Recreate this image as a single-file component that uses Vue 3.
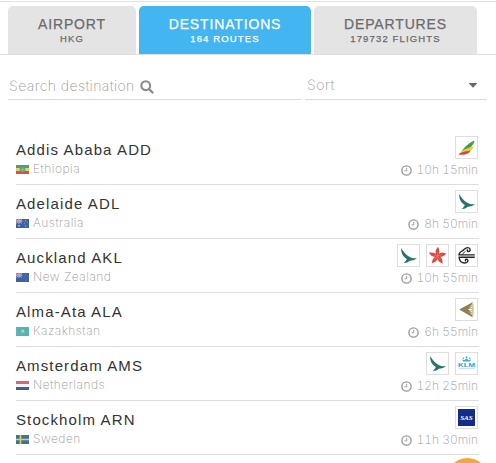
<script setup>
const tabs = [
  { title: 'AIRPORT', sub: 'HKG', cls: 'airport' },
  { title: 'DESTINATIONS', sub: '164 ROUTES', cls: 'dest' },
  { title: 'DEPARTURES', sub: '179732 FLIGHTS', cls: 'dep' },
]
const rows = [
  { name: 'Addis Ababa ADD', country: 'Ethiopia', flag: 'et', time: '10h 15min', logos: ['ethiopian'] },
  { name: 'Adelaide ADL', country: 'Australia', flag: 'au', time: '8h 50min', logos: ['cathay'] },
  { name: 'Auckland AKL', country: 'New Zealand', flag: 'nz', time: '10h 55min', logos: ['cathay', 'hongkong', 'airnz'] },
  { name: 'Alma-Ata ALA', country: 'Kazakhstan', flag: 'kz', time: '6h 55min', logos: ['astana'] },
  { name: 'Amsterdam AMS', country: 'Netherlands', flag: 'nl', time: '12h 25min', logos: ['cathay', 'klm'] },
  { name: 'Stockholm ARN', country: 'Sweden', flag: 'se', time: '11h 30min', logos: ['sas'] },
]
</script>

<template>
  <div class="page">
    <nav class="tabs">
      <div v-for="t in tabs" :key="t.title" class="tab" :class="t.cls">
        <div class="tab-title">{{ t.title }}</div>
        <div class="tab-sub">{{ t.sub }}</div>
      </div>
    </nav>

    <div class="filters">
      <div class="field search">
        <span>Search destination</span>
        <svg width="14" height="14" viewBox="0 0 14 14">
          <circle cx="5.7" cy="5.7" r="4.4" fill="none" stroke="#8c8c8c" stroke-width="2.1" />
          <path d="M9 9l3.5 3.5" stroke="#8c8c8c" stroke-width="2.4" stroke-linecap="round" />
        </svg>
      </div>
      <div class="field sort">
        <span>Sort</span>
        <svg width="10" height="5" viewBox="0 0 10 5"><path d="M0.6 0h8.8L5 4.7z" fill="#666" /></svg>
      </div>
    </div>

    <div class="list">
      <div v-for="r in rows" :key="r.name" class="row">
        <div class="left">
          <div class="name">{{ r.name }}</div>
          <div class="country">
            <svg class="flag" width="13" height="9" viewBox="0 0 13 9">
              <template v-if="r.flag === 'et'">
                <path fill="#4a9a62" d="M0 0h13v3H0z" /><path fill="#e8d04c" d="M0 3h13v3H0z" /><path fill="#d8493c" d="M0 6h13v3H0z" />
                <circle cx="6.5" cy="4.5" r="2.8" fill="#4d9f9b" /><path d="M6.5 2.8v3.4M5 4.5h3" stroke="#a6c777" stroke-width=".6" />
              </template>
              <template v-else-if="r.flag === 'au' || r.flag === 'nz'">
                <path fill="#315aa3" d="M0 0h13v9H0z" />
                <path d="M0 0l6 4.5M6 0L0 4.5" stroke="#b9b9dc" stroke-width=".8" />
                <path d="M3 0v4.5M0 2.2h6.2" stroke="#dcdcec" stroke-width="1.3" />
                <path d="M3 0v4.5M0 2.2h6.2" stroke="#d2626e" stroke-width=".7" />
                <g :fill="r.flag === 'au' ? '#e4e9f4' : '#a981a8'">
                  <circle cx="9.7" cy="1.8" r=".5" /><circle cx="8.3" cy="4" r=".4" /><circle cx="11.2" cy="3.6" r=".4" /><circle cx="9.7" cy="7" r=".5" />
                  <circle v-if="r.flag === 'au'" cx="3" cy="6.8" r=".8" />
                </g>
              </template>
              <template v-else-if="r.flag === 'kz'">
                <path fill="#49afb9" d="M0 0h13v9H0z" /><circle cx="6.7" cy="3.9" r="1.3" fill="#d5d868" />
                <path d="M4.3 5q2.4 2.5 4.8 0" fill="none" stroke="#9fc98a" stroke-width=".7" /><path d="M1 1v7" stroke="#84bd94" stroke-width=".6" />
              </template>
              <template v-else-if="r.flag === 'nl'">
                <path fill="#d3616a" d="M0 0h13v3H0z" /><path fill="#f5f5f5" d="M0 3h13v3H0z" /><path fill="#35568f" d="M0 6h13v3H0z" />
              </template>
              <template v-else>
                <path fill="#346b9a" d="M0 0h13v9H0z" /><path d="M4.5 0v9M0 4.5h13" stroke="#e4cf48" stroke-width="1.6" />
              </template>
            </svg>
            <span>{{ r.country }}</span>
          </div>
        </div>
        <div class="right">
          <div class="logos">
            <div v-for="l in r.logos" :key="l" class="logo">
              <svg width="21" height="21" viewBox="0 0 21 21">
                <template v-if="l === 'ethiopian'">
                  <path d="M18.7 3.4C13.5 5.4 8.6 9.5 5.8 14.2c6-1.2 11.2-4.3 12.9-10.8z" fill="#4d9a4a" />
                  <path d="M17.6 9C13 11 7.5 11.8 3.6 16.2c6.8.3 12.6-1.2 14-7.2z" fill="#e7d13f" />
                  <path d="M14.6 13.6C10.8 14.6 7 14.2 2.3 17.4c5.3 1 10.6.2 12.3-3.8z" fill="#d94636" />
                </template>
                <path v-else-if="l === 'cathay'" d="M3.3 3C2.8 8 5 11.8 8.8 14c-.7 1.7-1.9 3-3.2 4 2.9.1 4.4-.8 5.9-2 1.7-.6 5.2-.2 7.2-2.9-3 .6-5.6-.1-7.8-1.6C7.9 9.5 5.3 6.9 3.3 3z" fill="#28716e" />
                <template v-else-if="l === 'hongkong'">
                  <g fill="#dc473f">
                    <path v-for="n in 5" :key="n" :transform="`rotate(${n * 72} 10.5 11)`" d="M10.5 12C8 8.8 8.6 7 8.8 5.2L10.9 1.8C13 5.2 13 8.8 10.5 12z" />
                  </g>
                  <path d="M10.5 11l.3-4M10.5 11l4-1.2M10.5 11l2.3 3.5M10.5 11l-2.3 3.5M10.5 11l-4-1.2" stroke="#ef928a" stroke-width=".5" />
                </template>
                <g v-else-if="l === 'airnz'" fill="none" stroke="#222" stroke-width="1.4">
                  <path d="M18.8 9.9H3C3 7.2 5 6.6 6.8 5.6 8.4 4.4 9.3 2.6 11.8 2.6c2.8 0 3.2 3.8.6 3.9-1.3 0-1.6-1.4-.6-1.9" />
                  <path d="M18.8 12.3H3.2c0 3.4 2.3 5.7 5.5 5.7 3.6 0 4.2-3.7 1.8-3.8-1.2 0-1.5 1.4-.5 1.8" />
                  <path d="M6.4 9.5C7 7.8 8.4 7.6 9.4 6.4" stroke-width="1" />
                </g>
                <template v-else-if="l === 'astana'">
                  <path d="M3.2 10.5L16.9 3 13.9 9.4 12 10.5l1.9 1.1 3 6.9z" fill="#8e8252" />
                  <g fill="none" stroke="#b6a978" stroke-width="1"><path d="M16.9 4.5v12.6M16.7 9.6c-3.5.3-4-2.7-2.2-3 1.5-.1 1.4 1.4.5 1.4M16.7 11.5c-3.5-.3-4 2.7-2.2 3 1.5.1 1.4-1.4.5-1.4" /></g>
                </template>
                <template v-else-if="l === 'klm'">
                  <g fill="#35ade0"><circle cx="7.4" cy="5.2" r=".8" /><circle cx="10.5" cy="4.2" r=".9" /><circle cx="13.6" cy="5.2" r=".8" /><path d="M6 6.2l2.3 1 2.2-2 2.2 2 2.3-1-1 2.4H7z" /><path d="M2.5 15.2h16v.6h-16z" opacity=".5" /></g>
                  <text x="2" y="14" textLength="17" lengthAdjust="spacingAndGlyphs" font-size="6.2" font-weight="700" fill="#229fda">KLM</text>
                </template>
                <template v-else>
                  <path fill="#142d88" d="M2 2h17v17H2z" />
                  <text x="4.2" y="12.8" textLength="12.6" lengthAdjust="spacingAndGlyphs" font-size="6.3" font-weight="700" font-style="italic" font-family="Liberation Serif, serif" fill="#fff">SAS</text>
                </template>
              </svg>
            </div>
          </div>
          <div class="time">
            <svg width="11" height="11" viewBox="0 0 11 11" fill="none" stroke="#999">
              <circle cx="5.5" cy="5.5" r="4.6" stroke-width="1.4" /><path d="M5.7 2.8v3H3.6" stroke-width="1" />
            </svg>
            <span>{{ r.time }}</span>
          </div>
        </div>
      </div>
    </div>
    <div class="fab"></div>
  </div>
</template>

<style>
body { margin: 0; background: #fff; overflow: hidden; }
</style>

<style scoped>
.page {
  position: relative;
  box-sizing: border-box;
  width: 496px;
  height: 463px;
  overflow: hidden;
  padding-top: 1px;
  font-family: "Liberation Sans", Arial, sans-serif;
  background: linear-gradient(#e3e3e3, #e3e3e3) 0 1px / 100% 1px no-repeat #fff;
}
.tabs {
  display: flex;
  gap: 3px;
  padding: 5px 8px 0;
  height: 48px;
  border-bottom: 1px solid #dfdfdf;
}
.tab {
  box-sizing: border-box;
  height: 48px;
  padding-top: 10px;
  border-radius: 5px 5px 0 0;
  background: #e4e4e4;
  color: #6b6b6b;
  text-align: center;
  white-space: nowrap;
}
.airport { width: 128px; }
.dest { width: 172px; background: #43b5f0; color: #fff; }
.dep { width: 163px; }
.tab-title { font-size: 14px; line-height: 16px; letter-spacing: 0.85px; -webkit-text-stroke: 0.25px; }
.tab-sub { font-size: 9.5px; line-height: 13px; letter-spacing: 1.15px; -webkit-text-stroke: 0.25px; }
.filters { display: flex; gap: 4px; padding: 17px 9px 0 8px; }
.field {
  display: flex;
  align-items: center;
  box-sizing: border-box;
  height: 28px;
  border-bottom: 1px solid #d9d9d9;
  font-family: Inter, sans-serif;
  font-weight: 200;
  font-size: 14px;
  color: #999;
}
.search { width: 293px; gap: 5px; }
.search svg { margin-top: 2px; }
.search span { letter-spacing: 0.42px; padding-left: 1px; }
.sort { width: 182px; justify-content: space-between; padding: 0 9px 0 2px; }
.sort span { letter-spacing: 0.5px; margin-top: -2px; }
.list { padding: 31px 17px 0 16px; }
.row {
  display: flex;
  justify-content: space-between;
  box-sizing: border-box;
  height: 54px;
  border-bottom: 1px solid #dedede;
}
.left { padding-top: 10px; }
.name { font-size: 15px; line-height: 18px; letter-spacing: 1.12px; color: #333; }
.country, .time {
  display: flex;
  align-items: center;
  font-family: Inter, sans-serif;
  font-weight: 200;
  font-size: 12px;
  line-height: 16px;
  color: #999;
}
.country { gap: 4px; margin-top: 2px; letter-spacing: 0.48px; }
.flag { opacity: 0.95; margin-top: 1px; }
.right { padding: 5px 1px 0 0; display: flex; flex-direction: column; align-items: flex-end; }
.logos { display: flex; gap: 6px; }
.logo { width: 21px; height: 21px; border: 1px solid #dedede; }
.logo svg { display: block; }
.time { gap: 5px; margin-top: 3px; letter-spacing: 0; font-variant-numeric: tabular-nums; }
.fab {
  position: absolute;
  left: 447px;
  top: 458px;
  width: 41px;
  height: 41px;
  border-radius: 50%;
  background: #f2a73c;
}
</style>
